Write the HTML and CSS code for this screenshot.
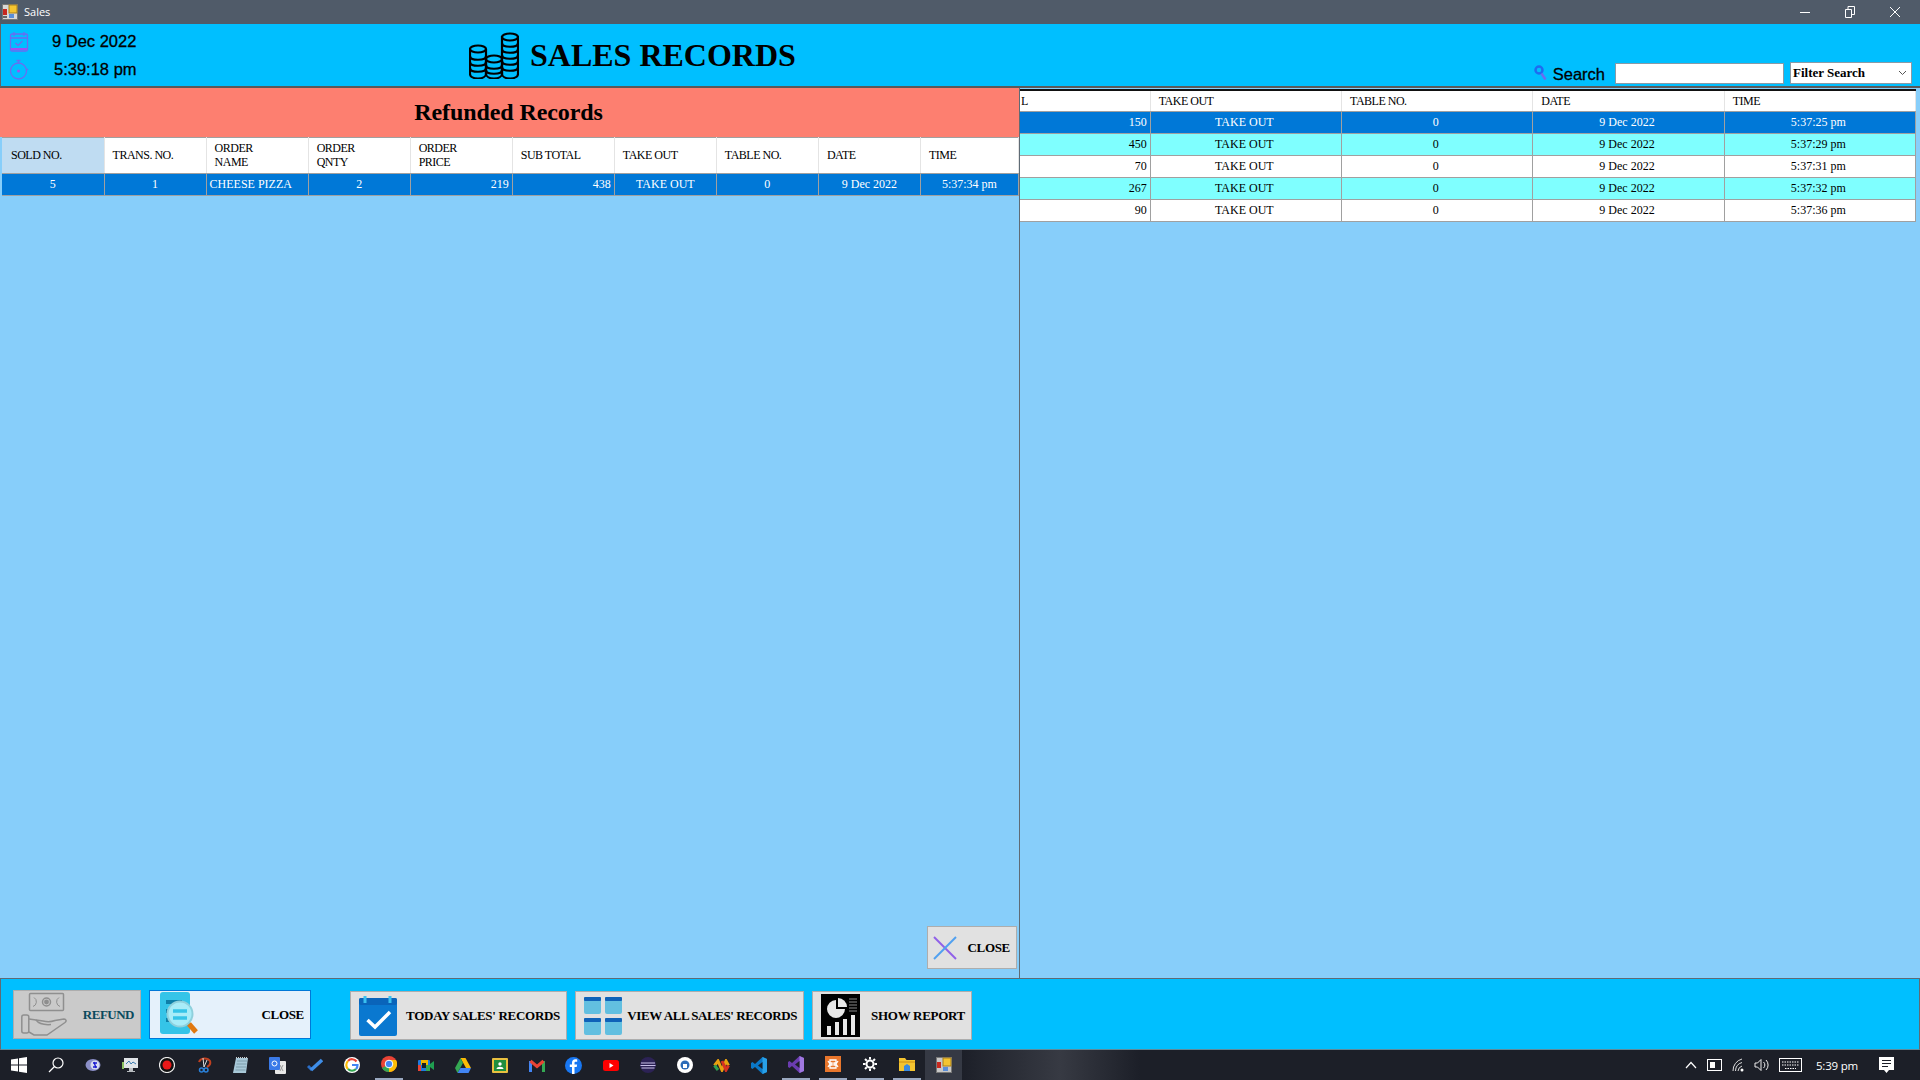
FILE: index.html
```html
<!DOCTYPE html>
<html lang="en">
<head>
  <meta charset="UTF-8">
  <title>Sales</title>
  <link rel="stylesheet" href="styles.css">
</head>
<body>
<div class="window">

  <div class="titlebar">
    <svg class="app-icon" width="16" height="16" viewBox="0 0 16 16"><rect x="0.5" y="0.5" width="15" height="15" fill="#d8d8d8" stroke="#777"/><rect x="7" y="1" width="8" height="8" fill="#f4c430" stroke="#a8801c"/><rect x="1" y="5" width="4" height="6" fill="#c8281e"/><rect x="7" y="10" width="5" height="4" fill="#5a8ed8"/><rect x="1" y="12" width="4" height="2" fill="#666"/></svg>
    <span class="app-title">Sales</span>
    <div class="window-buttons">
      <svg width="12" height="12" viewBox="0 0 12 12"><path d="M1 6.5h10" stroke="#fff"/></svg>
      <svg width="12" height="12" viewBox="0 0 12 12"><path d="M1.5 3.5h6v8h-6zM4 3.5V.5h6.500v8h-3" fill="none" stroke="#fff"/></svg>
      <svg width="12" height="12" viewBox="0 0 12 12"><path d="M1 1l10 10M11 1L1 11" stroke="#fff"/></svg>
    </div>
  </div>

  <header class="top">
    <div class="clock">
      <div class="clock-row">
        <svg width="20" height="21" viewBox="0 0 20 21" fill="none" stroke="#6a6cf0" stroke-width="1.300"><rect x="1.500" y="3" width="17" height="17" rx="1.500"/><path d="M1.500 7h17M5 1v4M15 1v4M6.500 12l2.500 2.500 4.500-4.500"/><path d="M2 18h16" stroke="#a050f0" stroke-width="2"/></svg>
        <span class="date-text">9 Dec 2022</span>
      </div>
      <div class="clock-row">
        <svg width="20" height="21" viewBox="0 0 20 21" fill="none" stroke="#6a6cf0" stroke-width="1.300"><circle cx="9.500" cy="12" r="8"/><path d="M7.500 1.500h4M9.500 1.500V4M18 10l1 1"/><circle cx="9.500" cy="12" r="1.500" fill="#a050f0" stroke="none"/></svg>
        <span class="time-text">5:39:18 pm</span>
      </div>
    </div>
    <div class="brand">
      <svg class="coins" width="50" height="47" viewBox="0 0 50 47" fill="none" stroke="#000" stroke-width="2.200">
        <path d="M1 17v25c0 6 16 6 16 0V17"/><ellipse cx="9" cy="17" rx="8" ry="3.500"/><path d="M1 24c0 5 16 5 16 0M1 30c0 5 16 5 16 0M1 36c0 5 16 5 16 0"/>
        <path d="M17 28v14c0 6 16 6 16 0V28"/><ellipse cx="25" cy="27" rx="8" ry="3.500"/><path d="M17 33c0 5 16 5 16 0M17 38c0 5 16 5 16 0"/>
        <path d="M33 4v38c0 6 16 6 16 0V4"/><ellipse cx="41" cy="5" rx="8" ry="3.500"/><path d="M33 11c0 5 16 5 16 0M33 17c0 5 16 5 16 0M33 23c0 5 16 5 16 0M33 29c0 5 16 5 16 0M33 35c0 5 16 5 16 0"/>
      </svg>
      <h1>SALES RECORDS</h1>
    </div>
    <div class="search">
      <svg width="14" height="16" viewBox="0 0 14 16" fill="none"><circle cx="5" cy="5" r="3.500" stroke="#1e6cf0" stroke-width="2.500"/><path d="M7.500 8.500l4 6" stroke="#6a6cf0" stroke-width="2.500"/></svg>
      <span class="search-label">Search</span>
      <input class="search-input" type="text">
      <div class="filter"><span>Filter Search</span><svg width="9" height="6" viewBox="0 0 9 6"><path d="M1 1l3.500 3.500L8 1" fill="none" stroke="#555"/></svg></div>
    </div>
  </header>

  <main class="content">
    <section class="left">
      <h2 class="refund-title">Refunded Records</h2>
      <table class="grid grid-left">
        <thead>
          <tr>
            <th class="picked">SOLD NO.</th><th>TRANS. NO.</th><th>ORDER<br>NAME</th><th>ORDER<br>QNTY</th><th>ORDER<br>PRICE</th><th>SUB TOTAL</th><th>TAKE OUT</th><th>TABLE NO.</th><th>DATE</th><th>TIME</th>
          </tr>
        </thead>
        <tbody>
          <tr class="selected">
            <td class="mid">5</td><td class="mid">1</td><td>CHEESE PIZZA</td><td class="mid">2</td><td class="num">219</td><td class="num">438</td><td class="mid">TAKE OUT</td><td class="mid">0</td><td class="mid">9 Dec 2022</td><td class="mid">5:37:34 pm</td>
          </tr>
        </tbody>
      </table>
      <button class="btn btn-panel-close">
        <svg width="26" height="26" viewBox="0 0 26 26" fill="none" stroke-width="2"><path d="M2 2l22 22" stroke="#9060e8"/><path d="M24 2L2 24" stroke="#50a0f0"/></svg>
        <span>CLOSE</span>
      </button>
    </section>

    <section class="right">
      <table class="grid grid-right">
        <thead>
          <tr><th class="cut">L</th><th>TAKE OUT</th><th>TABLE NO.</th><th>DATE</th><th>TIME</th></tr>
        </thead>
        <tbody>
          <tr class="selected"><td class="num">150</td><td class="mid">TAKE OUT</td><td class="mid">0</td><td class="mid">9 Dec 2022</td><td class="mid">5:37:25 pm</td></tr>
          <tr class="alt"><td class="num">450</td><td class="mid">TAKE OUT</td><td class="mid">0</td><td class="mid">9 Dec 2022</td><td class="mid">5:37:29 pm</td></tr>
          <tr><td class="num">70</td><td class="mid">TAKE OUT</td><td class="mid">0</td><td class="mid">9 Dec 2022</td><td class="mid">5:37:31 pm</td></tr>
          <tr class="alt"><td class="num">267</td><td class="mid">TAKE OUT</td><td class="mid">0</td><td class="mid">9 Dec 2022</td><td class="mid">5:37:32 pm</td></tr>
          <tr><td class="num">90</td><td class="mid">TAKE OUT</td><td class="mid">0</td><td class="mid">9 Dec 2022</td><td class="mid">5:37:36 pm</td></tr>
        </tbody>
      </table>
    </section>
  </main>

  <footer class="actions">
    <button class="btn btn-refund">
      <svg width="46" height="46" viewBox="0 0 46 46" fill="none" stroke="#8f8f8f" stroke-width="1.500"><rect x="8.500" y="1.500" width="34" height="17" rx="1"/><path d="M13 5.500a5 5 0 0 1-1 9M38 5.500a5 5 0 0 0 1 9" stroke-width="1"/><circle cx="25.500" cy="10" r="4"/><circle cx="25.500" cy="10" r="1.700" fill="#8f8f8f"/><rect x=".8" y="23" width="7" height="18" rx="2"/><path d="M8 27l14 2c4 1 8 1 12-.5l9-1.500c2 0 3 2 1 3.500L26 43H13l-5-3"/><path d="M15 28c3 4 9 5 15 4.500"/></svg>
      <span>REFUND</span>
    </button>
    <button class="btn btn-close">
      <svg width="38" height="46" viewBox="0 0 38 46"><rect x="0" y="0" width="30" height="42" rx="3" fill="#35c4e8"/><path d="M6 10h16M6 19h16M6 28h16" stroke="#0e7fa8" stroke-width="4"/><circle cx="20" cy="22" r="12.500" fill="#a8ecf8" stroke="#8fd0dc" stroke-width="2"/><path d="M13 19h14M13 26h14" stroke="#35c4e8" stroke-width="3.500"/><path d="M29 32l7 8" stroke="#e07810" stroke-width="5"/></svg>
      <span>CLOSE</span>
    </button>
    <button class="btn btn-today">
      <svg width="38" height="40" viewBox="0 0 38 40"><rect x="0" y="2" width="38" height="38" rx="2" fill="#0a78d0"/><rect x="0" y="2" width="38" height="7" rx="2" fill="#0a64ba"/><path d="M6 0v7M31 0v7" stroke="#38c0f0" stroke-width="3"/><path d="M8.500 24l7.500 7L31 16" fill="none" stroke="#fff" stroke-width="3.500"/></svg>
      <span>TODAY SALES' RECORDS</span>
    </button>
    <button class="btn btn-all">
      <svg width="38" height="38" viewBox="0 0 38 38"><g id="tiles"><rect x="0" y="0" width="17" height="17" rx="2" fill="#62bfe0"/><rect x="0" y="0" width="17" height="4" rx="1" fill="#0f62b8"/><rect x="21" y="0" width="17" height="17" rx="2" fill="#62bfe0"/><rect x="21" y="0" width="17" height="4" rx="1" fill="#0f62b8"/><rect x="0" y="21" width="17" height="17" rx="2" fill="#62bfe0"/><rect x="0" y="21" width="17" height="4" rx="1" fill="#0f62b8"/><rect x="21" y="21" width="17" height="17" rx="2" fill="#62bfe0"/><rect x="21" y="21" width="17" height="4" rx="1" fill="#0f62b8"/></g></svg>
      <span>VIEW ALL SALES' RECORDS</span>
    </button>
    <button class="btn btn-report">
      <svg width="39" height="43" viewBox="0 0 39 43"><rect width="39" height="43" fill="#000"/><path d="M15 6a9 9 0 1 0 9 9h-9z" fill="#e8e8e8"/><path d="M17 4a9 9 0 0 1 9 9h-9z" fill="#e8e8e8"/><path d="M28 5h8M28 8h8M28 11h8M28 14h8M28 17h8" stroke="#888"/><path d="M6 41v-9h4v9zM14 41V28h4v13zM22 41V25h4v16zM30 41V21h4v20z" fill="#e8e8e8"/></svg>
      <span>SHOW REPORT</span>
    </button>
  </footer>

  <nav class="taskbar">
    <div class="task"><svg width="16" height="16" viewBox="0 0 16 16" fill="#fff"><path d="M0 2.500l7-1v6H0zM8 1.300L16 0v7.500H8zM0 8.500h7v6l-7-1zM8 8.500h8V16l-8-1.300z"/></svg></div>
    <div class="task"><svg width="16" height="16" viewBox="0 0 16 16" fill="none" stroke="#fff" stroke-width="1.200"><circle cx="10" cy="6" r="5"/><path d="M6.500 9.500L1 15"/></svg></div>
    <div class="task"><svg width="16" height="16" viewBox="0 0 16 16"><ellipse cx="8" cy="8" rx="7.500" ry="6" fill="#8b8fc8"/><circle cx="10" cy="8" r="4.500" fill="#d8dcf0"/><path d="M8 6h4M8 10h4M9 5l2 6" stroke="#1818d0" stroke-width="1.300"/></svg></div>
    <div class="task"><svg width="16" height="16" viewBox="0 0 16 16"><rect x="2" y="1" width="14" height="10" fill="#e0e4e8"/><path d="M4 7l3-3 2 3 2-2 3 2" fill="none" stroke="#3a7ab0"/><rect x="0" y="5" width="2" height="7" fill="#8bc060"/><path d="M7 11h4v3h2v1H5v-1h2z" fill="#b8bcc0"/></svg></div>
    <div class="task"><svg width="16" height="16" viewBox="0 0 16 16"><circle cx="8" cy="8" r="7.500" fill="#111" stroke="#eee" stroke-width="1.200"/><circle cx="8" cy="8" r="4.500" fill="#e81818"/></svg></div>
    <div class="task"><svg width="16" height="16" viewBox="0 0 16 16" fill="none"><path d="M3 5a6 5 0 0 1 11-1c1 3-1 5-3 6" stroke="#c04020" stroke-width="2"/><path d="M7 1l1 9M11 3L8 10" stroke="#ddd"/><circle cx="5.500" cy="13" r="2" stroke="#2a80d8" stroke-width="1.500"/><circle cx="10" cy="13" r="2" stroke="#2a80d8" stroke-width="1.500"/></svg></div>
    <div class="task"><svg width="16" height="16" viewBox="0 0 16 16"><path d="M3 1h12l-2 15H0z" fill="#a8c8d8"/><path d="M4 4h10M3.500 7h10M3 10h10M2.500 13h10" stroke="#6a8a9a" stroke-width=".7"/><path d="M3 .5h12" stroke="#ccc" stroke-dasharray="1 1"/></svg></div>
    <div class="task"><svg width="17" height="17" viewBox="0 0 17 17"><rect x="6" y="4" width="11" height="13" rx="1" fill="#e8e8e8"/><path d="M11 8l3 6M14 8l-3 6" stroke="#999"/><rect width="11" height="13" rx="1" fill="#3a7ae8"/><circle cx="5.500" cy="6.500" r="2.500" fill="none" stroke="#fff"/></svg></div>
    <div class="task"><svg width="16" height="16" viewBox="0 0 16 16" fill="none"><path d="M1 9l4 4" stroke="#2a6ec8" stroke-width="3"/><path d="M4 13L15 3" stroke="#3f8ee8" stroke-width="3.500"/></svg></div>
    <div class="task"><svg width="16" height="16" viewBox="0 0 16 16"><circle cx="8" cy="8" r="8" fill="#fff"/><path d="M12.500 4.500A5.500 5.500 0 0 0 4 4" fill="none" stroke="#ea4335" stroke-width="2.200"/><path d="M4 4a5.500 5.500 0 0 0 0 8" fill="none" stroke="#fbbc05" stroke-width="2.200"/><path d="M4 12a5.500 5.500 0 0 0 8 0" fill="none" stroke="#34a853" stroke-width="2.200"/><path d="M8 8h5.500A5.500 5.500 0 0 1 12 12" fill="none" stroke="#4285f4" stroke-width="2.200"/></svg></div>
    <div class="task open"><svg width="16" height="16" viewBox="0 0 16 16"><circle cx="8" cy="8" r="8" fill="#ea4335"/><path d="M8 8L1 12a8 8 0 0 0 7 4z" fill="#34a853"/><path d="M8 16a8 8 0 0 0 7-12H8z" fill="#fbbc05"/><circle cx="8" cy="8" r="3.800" fill="#4285f4" stroke="#fff"/></svg></div>
    <div class="task"><svg width="16" height="16" viewBox="0 0 16 16"><rect x="0" y="3" width="12" height="11" rx="1" fill="#1f7ae0"/><path d="M3 3h7v5H3z" fill="#f4b400"/><path d="M0 8h3v6H0z" fill="#ea4335"/><path d="M8 8h4v6H8z" fill="#34a853"/><rect x="4" y="6" width="4" height="5" fill="#1c1f28"/><path d="M12 7l4-3v9l-4-3z" fill="#1f9e50"/></svg></div>
    <div class="task"><svg width="16" height="15" viewBox="0 0 16 15"><path d="M5.500 0h5L16 10h-5z" fill="#fbbc05"/><path d="M5.500 0L0 10l2.500 5 5.500-10z" fill="#34a853"/><path d="M5.500 10H16l-2.500 5h-11z" fill="#4285f4"/></svg></div>
    <div class="task"><svg width="16" height="15" viewBox="0 0 16 15"><rect width="16" height="15" rx="1" fill="#e8c040"/><rect x="2" y="2" width="12" height="11" fill="#1e8e3e"/><circle cx="8" cy="6" r="1.700" fill="#fff"/><path d="M4.500 11c0-3 7-3 7 0z" fill="#fff"/></svg></div>
    <div class="task"><svg width="16" height="13" viewBox="0 0 16 13" fill="none"><path d="M1.500 13V2" stroke="#4285f4" stroke-width="3"/><path d="M14.500 13V2" stroke="#34a853" stroke-width="3"/><path d="M1.500 2L8 7.500 14.500 2" stroke="#ea4335" stroke-width="3"/></svg></div>
    <div class="task"><svg width="17" height="17" viewBox="0 0 17 17"><circle cx="8.500" cy="8.500" r="8.500" fill="#1877f2"/><path d="M9.500 17v-7h2.200l.4-2.500H9.500V6c0-.8.300-1.300 1.300-1.300h1.400V2.500C11.800 2.400 11 2.300 10.300 2.300 8.300 2.300 7 3.500 7 5.700v1.800H4.800V10H7v7z" fill="#fff"/></svg></div>
    <div class="task"><svg width="16" height="11" viewBox="0 0 16 11"><rect width="16" height="11" rx="2.500" fill="#f00"/><path d="M6.500 3l4 2.500-4 2.500z" fill="#fff"/></svg></div>
    <div class="task"><svg width="16" height="16" viewBox="0 0 16 16"><circle cx="8" cy="8" r="8" fill="#2c2255"/><path d="M1 6h14M.5 8.500h15M1.500 11h13" stroke="#c8c0e8" stroke-width="1.200"/></svg></div>
    <div class="task"><svg width="16" height="16" viewBox="0 0 16 16"><circle cx="8" cy="8" r="8" fill="#fff"/><circle cx="8" cy="8" r="4.500" fill="#2a6ab8"/><rect x="6" y="7" width="4" height="4" fill="#fff"/></svg></div>
    <div class="task"><svg width="17" height="13" viewBox="0 0 17 13" fill="none" stroke-width="3"><path d="M1.500 6.500L5 2l4 9 4-9 2.500 4.500" stroke="#e8a010"/><path d="M1.500 6.500L5 11" stroke="#30a050"/><path d="M9 2l4 9 2.500-4.500" stroke="#d83020"/></svg></div>
    <div class="task"><svg width="16" height="17" viewBox="0 0 16 17"><path d="M11.500 0L16 2v13l-4.500 2L4 10l-2.500 2L0 11V6l1.500-1L4 7z" fill="#0a78c8"/><path d="M11.500 0L16 2v13l-4.500 2z" fill="#28a0e8"/><path d="M11.500 5L7 8.500l4.500 3.500z" fill="#1c1f28"/></svg></div>
    <div class="task open"><svg width="16" height="17" viewBox="0 0 16 17"><path d="M11.500 0L16 2v13l-4.500 2L4 10l-2.500 2L0 11V6l1.500-1L4 7z" fill="#6a3cb0"/><path d="M11.500 0L16 2v13l-4.500 2z" fill="#a078e0"/><path d="M11.500 5L7 8.500l4.500 3.500z" fill="#1c1f28"/></svg></div>
    <div class="task open"><svg width="16" height="16" viewBox="0 0 16 16"><rect width="16" height="16" fill="#e8762c"/><path d="M5 4h6v3H9v2h2v3H5V9h2V7H5zM3 5l2 3-2 3M13 5l-2 3 2 3" fill="none" stroke="#fff" stroke-width="1.300"/></svg></div>
    <div class="task open"><svg width="14" height="14" viewBox="0 0 14 14" fill="none" stroke="#fff" stroke-width="2"><circle cx="7" cy="7" r="3.500"/><path d="M7 0v2.500M7 11.500V14M0 7h2.500M11.500 7H14M2 2l1.800 1.800M10.200 10.200L12 12M12 2l-1.800 1.800M3.800 10.200L2 12"/></svg></div>
    <div class="task open"><svg width="16" height="14" viewBox="0 0 16 14"><path d="M0 1h6l1.500 2H16v11H0z" fill="#f4c430"/><path d="M0 4h16v2H0z" fill="#e0a820"/><path d="M5 14v-5l3-2 3 2v5z" fill="#3a8ae0"/></svg></div>
    <div class="task active"><svg width="16" height="16" viewBox="0 0 16 16"><rect x="0.500" y="0.500" width="15" height="15" fill="#c8c8c8" stroke="#777"/><rect x="7" y="1" width="8" height="8" fill="#f4c430" stroke="#a8801c"/><rect x="1" y="5" width="4" height="6" fill="#c8281e"/><rect x="7" y="10" width="5" height="4" fill="#5a8ed8"/></svg></div>
    <div class="tray">
      <svg width="12" height="8" viewBox="0 0 12 8"><path d="M1 7l5-5.500L11 7" fill="none" stroke="#fff" stroke-width="1.200"/></svg>
      <svg width="15" height="12" viewBox="0 0 15 12"><rect x=".5" y=".5" width="14" height="11" fill="none" stroke="#fff"/><rect x="3" y="3" width="5" height="6" fill="#fff"/></svg>
      <svg class="wifi" width="14" height="14" viewBox="0 0 14 14" fill="none" stroke="#ddd"><path d="M1 13a12 12 0 0 1 9-12M3.500 13a9 9 0 0 1 6.500-8.500M6 13a6 6 0 0 1 4-5"/><circle cx="10" cy="12" r="1.500" fill="#fff" stroke="none"/></svg>
      <svg width="15" height="14" viewBox="0 0 15 14" fill="none" stroke="#eee"><path d="M1 5h2.500L7 1.500v11L3.500 9H1zM9.500 4a4 4 0 0 1 0 6M12 2a7 7 0 0 1 0 10"/></svg>
      <svg width="23" height="14" viewBox="0 0 23 14" fill="none" stroke="#fff"><rect x=".5" y=".5" width="22" height="13"/><path d="M3 4h17M3 7h17M6 10.500h11" stroke-dasharray="1.500 1"/></svg>
      <span class="tray-time">5:39 pm</span>
      <svg class="notif" width="15" height="16" viewBox="0 0 15 16"><path d="M0 0h15v13h-5l-2.500 3L5 13H0z" fill="#fff"/><path d="M3 3.500h9M3 6.500h9M3 9.500h6" stroke="#1c1f28"/></svg>
    </div>
  </nav>

</div>
</body>
</html>
```

FILE: styles.css
```css
* {
  box-sizing: border-box;
}
html, body {
  margin: 0;
  height: 100%;
  overflow: hidden;
}
body {
  font-family: "Liberation Serif", serif;
  color: #000;
}
.window {
  width: 1920px;
  height: 1080px;
  display: flex;
  flex-direction: column;
}

/* title bar */
.titlebar {
  height: 24px;
  background: #505b69;
  display: flex;
  align-items: center;
  padding-left: 2px;
  flex: none;
}
.app-title {
  font-family: "Open Sans", sans-serif;
  color: #fff;
  font-size: 11px;
  margin: 0 0 2px 6px;
}
.window-buttons {
  margin-left: auto;
  display: flex;
  gap: 33px;
  padding: 0 19px 1px 0;
}

/* blue header */
.top {
  height: 64px;
  flex: none;
  background: #00bfff;
  border-left: 1px solid #646464;
  border-bottom: 2px solid #5a5a5a;
  display: flex;
}
.clock {
  width: 468px;
  padding: 7px 0 0 8px;
  display: flex;
  flex-direction: column;
  gap: 7px;
}
.clock-row {
  display: flex;
  align-items: center;
  height: 21px;
}
.date-text, .time-text {
  font-family: "Liberation Sans", sans-serif;
  font-size: 16.500px;
  -webkit-text-stroke: 0.300px #000;
}
.date-text {
  margin-left: 23px;
}
.time-text {
  margin-left: 25px;
}
.brand {
  display: flex;
  align-items: center;
  gap: 11px;
}
.coins {
  display: block;
}
.brand h1 {
  margin: 0;
  font-size: 32px;
  font-weight: bold;
  white-space: nowrap;
}
.search {
  margin-left: auto;
  align-self: flex-end;
  padding: 0 8px 2px 0;
  display: flex;
  align-items: center;
}
.search-label {
  font-family: "Liberation Sans", sans-serif;
  font-size: 16.500px;
  -webkit-text-stroke: 0.300px #000;
  margin: 3px 10px 0 5px;
}
.search-input {
  width: 169px;
  height: 21px;
  margin: 0 6px 0 0;
  border: 1px solid #8a9aa6;
  background: #fff;
  padding: 0;
}
.filter {
  width: 122px;
  height: 22px;
  background: #fff;
  border: 1px solid #8a9aa6;
  display: flex;
  align-items: center;
  justify-content: space-between;
  padding: 0 4px 0 2px;
  font-size: 13px;
  font-weight: bold;
}

/* main area */
.content {
  flex: 1;
  display: flex;
  background: #87cefa;
  min-height: 0;
}
.left {
  width: 1020px;
  border-right: 1px solid #5f6b75;
  display: flex;
  flex-direction: column;
}
.refund-title {
  height: 49px;
  margin: 0;
  background: #fd7f70;
  font-size: 24px;
  font-weight: bold;
  letter-spacing: -0.100px;
  display: flex;
  align-items: center;
  justify-content: center;
  padding-right: 2px;
  flex: none;
}
.right {
  flex: 1;
  padding: 1px 3px 0 0;
}

/* tables */
.grid {
  border-collapse: collapse;
  table-layout: fixed;
  font-size: 12px;
}
.grid th {
  background: #fff;
  font-weight: normal;
  text-align: left;
  padding: 0 0 2px 8px;
  line-height: 14px;
  letter-spacing: -0.500px;
  border-right: 1px solid #e4e4e4;
  border-bottom: 1px solid #a0a0a0;
  overflow: hidden;
}
.grid td {
  border-right: 1px solid #a0a0a0;
  border-bottom: 1px solid #a0a0a0;
  background: #fff;
  padding: 0 3px 1px;
  white-space: nowrap;
  overflow: hidden;
}
.grid .mid {
  text-align: center;
}
.grid .num {
  text-align: right;
}
.grid .selected td {
  background: #0078d7;
  color: #fff;
}
.grid .alt td {
  background: #7fffff;
}
.grid-left {
  width: 1017px;
  margin-left: 2px;
}
.grid-left th {
  height: 36px;
  width: 102px;
  border-top: 1px solid #a0a0a0;
}
.grid-left .picked {
  background: #bfdcf2;
  padding-left: 9px;
}
.grid-left td {
  height: 22px;
}
.grid-left tr > :last-child {
  width: 98px;
}
.grid-right {
  width: 896px;
  border-top: 2px solid #111;
}
.grid-right th {
  height: 21px;
  width: 191px;
  padding-bottom: 0;
}
.grid-right th.cut {
  width: 130px;
  padding-left: 1px;
}
.grid-right td {
  height: 22px;
  padding: 1px 3px 0;
}
.grid-right .mid {
  padding: 1px 5px 0 2px;
}

/* buttons */
.btn {
  font-family: "Liberation Serif", serif;
  font-size: 13px;
  font-weight: bold;
  letter-spacing: -0.300px;
  white-space: nowrap;
  color: #000;
  background: #e1e1e1;
  border: 1px solid #adadad;
  display: flex;
  align-items: center;
  justify-content: space-between;
  padding: 0 6px 0 8px;
  margin: 0;
}
.btn-panel-close {
  margin: auto 2px 9px auto;
  width: 90px;
  height: 43px;
  padding: 0 6px 0 4px;
}
.actions {
  height: 72px;
  flex: none;
  background: #00bfff;
  border-top: 1px solid #5f6b75;
  border-left: 1px solid #5f6b75;
  border-right: 1px solid #5f6b75;
  border-bottom: 1px solid #5f8a9a;
  display: flex;
  align-items: flex-start;
  padding: 11px 0 0 12px;
}
.btn-refund {
  width: 128px;
  height: 49px;
  background: #cacaca;
  color: #0a4a5e;
  letter-spacing: -0.500px;
  padding: 0 6px 0 7px;
  margin-right: 8px;
}
.btn-close {
  width: 162px;
  height: 49px;
  background: #e5f1fb;
  border-color: #0078d7;
  padding: 0 6px 0 10px;
  margin-right: 39px;
}
.btn-today, .btn-all, .btn-report {
  height: 49px;
  margin-top: 1px;
}
.btn-today {
  width: 217px;
  margin-right: 8px;
}
.btn-all {
  width: 229px;
  letter-spacing: -0.420px;
  margin-right: 8px;
}
.btn-report {
  width: 160px;
}

/* taskbar */
.taskbar {
  height: 30px;
  flex: none;
  display: flex;
  background: linear-gradient(90deg, #1c1f28 0, #1c1f28 960px, #373a43 1060px, #1c1f28 1140px);
}
.task {
  width: 37px;
  height: 30px;
  flex: none;
  display: flex;
  flex-direction: column;
  align-items: center;
}
.task svg {
  margin: auto 0;
  display: block;
}
.task.open::after {
  content: "";
  width: 28px;
  height: 2px;
  background: #9aa8c0;
  flex: none;
}
.task.active {
  background: #353944;
}
.tray {
  margin-left: auto;
  display: flex;
  align-items: center;
}
.tray svg {
  display: block;
  margin-right: 10px;
}
.tray .wifi {
  margin-right: 8px;
}
.tray-time {
  font-family: "Open Sans", sans-serif;
  font-size: 11.500px;
  letter-spacing: -0.200px;
  color: #fff;
  margin: 0 21px 0 4px;
  white-space: nowrap;
}
.tray .notif {
  margin-right: 26px;
}
```
